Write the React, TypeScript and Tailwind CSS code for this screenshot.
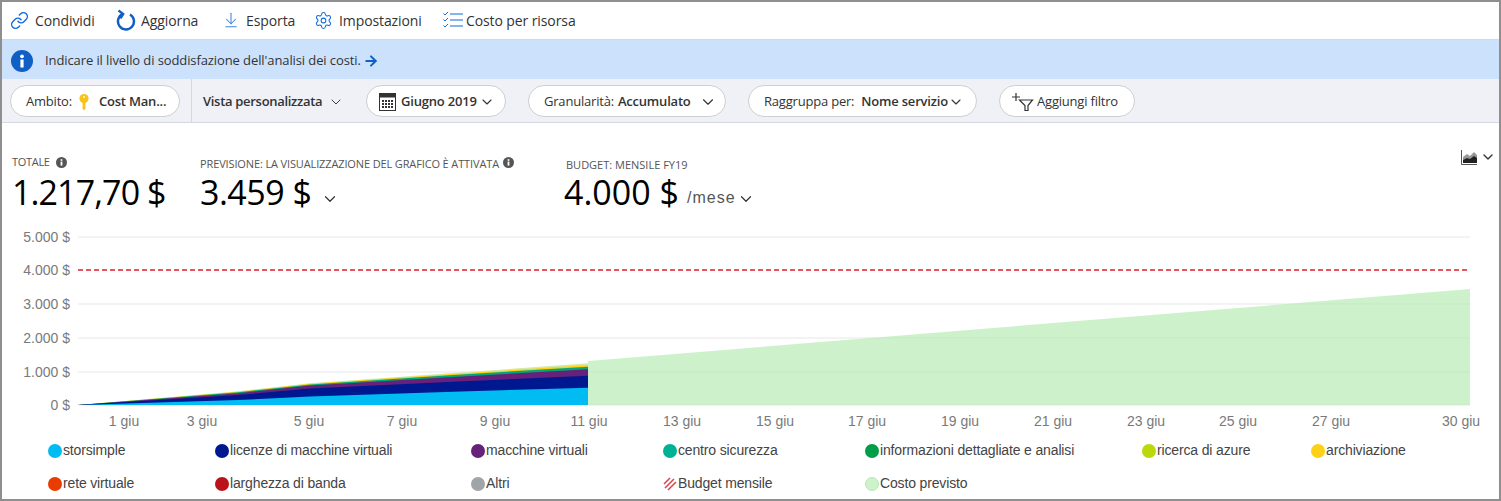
import { ArrowDownToLine, ArrowRight, ChevronDown, Link, Settings } from "lucide-react";

const SEGOE = "font-['Open_Sans',sans-serif]";

const Y_TICKS = [
  { label: "5.000 $", y: 237 },
  { label: "4.000 $", y: 270 },
  { label: "3.000 $", y: 304 },
  { label: "2.000 $", y: 338 },
  { label: "1.000 $", y: 372 },
  { label: "0 $", y: 405 },
];

const X_TICKS = [
  { label: "1 giu", x: 124 },
  { label: "3 giu", x: 202 },
  { label: "5 giu", x: 309 },
  { label: "7 giu", x: 402 },
  { label: "9 giu", x: 495 },
  { label: "11 giu", x: 589 },
  { label: "13 giu", x: 682 },
  { label: "15 giu", x: 775 },
  { label: "17 giu", x: 867 },
  { label: "19 giu", x: 960 },
  { label: "21 giu", x: 1053 },
  { label: "23 giu", x: 1146 },
  { label: "25 giu", x: 1238 },
  { label: "27 giu", x: 1331 },
  { label: "30 giu", x: 1461 },
];

const STACK_X = [78, 238, 310, 453, 588];
const STACK = [
  { color: "#d6e9a8", top: [405, 391.2, 383.2, 373, 363.3] },
  { color: "#fcd116", top: [405, 391.8, 383.8, 374, 365] },
  { color: "#00a878", top: [405, 392.3, 384.5, 375, 366.7] },
  { color: "#68217a", top: [405, 393.3, 385.5, 377, 369.3] },
  { color: "#00188f", top: [405, 395, 388.5, 381.7, 375.7] },
  { color: "#00bcf2", top: [405, 400, 396.5, 391.7, 387.7] },
];

const LEGEND: { label: string; color?: string }[] = [
  { label: "storsimple", color: "bg-[#00bcf2]" },
  { label: "licenze di macchine virtuali", color: "bg-[#00188f]" },
  { label: "macchine virtuali", color: "bg-[#68217a]" },
  { label: "centro sicurezza", color: "bg-[#00b294]" },
  { label: "informazioni dettagliate e analisi", color: "bg-[#009e49]" },
  { label: "ricerca di azure", color: "bg-[#bad80a]" },
  { label: "archiviazione", color: "bg-[#fcd116]" },
  { label: "rete virtuale", color: "bg-[#e83c00]" },
  { label: "larghezza di banda", color: "bg-[#ba141a]" },
  { label: "Altri", color: "bg-[#a0a5a8]" },
  { label: "Budget mensile" },
  { label: "Costo previsto", color: "bg-[#cdf2cc] border border-[#b5e8b4]" },
];

function RefreshIcon() {
  return (
    <svg width="20" height="22" viewBox="0 0 20 22" fill="none" stroke="#0f5fc4" strokeWidth="2.5">
      <path d="M6.5 5.2A8 8 0 1 0 14 5.5" />
      <path d="M2.5 1.5 7.3 5 4.5 9.5" strokeWidth="2.2" />
    </svg>
  );
}

function ChecklistIcon() {
  return (
    <svg width="20" height="18" viewBox="0 0 20 18" fill="none" stroke="#0f6cdb" strokeWidth="1.2">
      <path d="M7 3h13M7 9h13M7 15h13" />
      <path d="M.5 2.5 2 4l3-3M.5 8.5 2 10l3-3M.5 14.5 2 16l3-3" strokeWidth="1" />
    </svg>
  );
}

function InfoDot() {
  return (
    <svg width="11" height="11" viewBox="0 0 11 11">
      <circle cx="5.5" cy="5.5" r="5.5" fill="#555" />
      <rect x="4.6" y="4.6" width="1.8" height="4" fill="#fff" />
      <rect x="4.6" y="2.2" width="1.8" height="1.6" fill="#fff" />
    </svg>
  );
}

function KeyIcon() {
  return (
    <svg width="12" height="17" viewBox="0 0 12 17" fill="#f7c21a">
      <circle cx="6" cy="4.6" r="4.6" />
      <path d="M4.6 8h2.8v6.5L6 16.5l-1.4-2z" />
      <circle cx="6" cy="3" r="1.1" fill="#fff3c0" />
    </svg>
  );
}

function CalendarIcon() {
  return (
    <svg width="17" height="18" viewBox="0 0 17 18">
      <rect x="0.5" y="0.5" width="16" height="17" fill="#fff" stroke="#333" />
      <rect x="0.5" y="0.5" width="16" height="4" fill="#333" />
      {[3, 6, 9, 12].flatMap((x) =>
        [7, 10, 13].map((y) => <rect key={`${x}-${y}`} x={x} y={y} width="2" height="2" fill="#333" />),
      )}
    </svg>
  );
}

function AddFilterIcon() {
  return (
    <svg width="22" height="20" viewBox="0 0 22 20" fill="none" stroke="#333" strokeWidth="1.2">
      <path d="M0 5h8M4 1v8" />
      <path d="M7.5 8h13L16 13.5V18.5h-3V13.5z" />
    </svg>
  );
}

function AreaChartIcon() {
  return (
    <svg width="16" height="15" viewBox="0 0 16 15">
      <path d="M.5 0v14.5H16" fill="none" stroke="#555" />
      <path d="M2 13V7l4-3 3 2 4-4 3 3v8z" fill="#999" />
      <path d="M2 13V10l4-2 3 1 4-3 3 2v5z" fill="#222" />
    </svg>
  );
}

function ToolbarItem({ icon, label, width }: { icon: React.ReactNode; label: string; width: string }) {
  return (
    <div className={`flex items-center ${width}`}>
      <span className="flex w-[25px] shrink-0 items-center">{icon}</span>
      <span className="whitespace-nowrap">{label}</span>
    </div>
  );
}

function Pill({ className, children }: { className: string; children: React.ReactNode }) {
  return (
    <div className={`box-border flex h-[32px] shrink-0 items-center rounded-full border border-[#cfcfcf] bg-white pt-[3px] ${className}`}>
      {children}
    </div>
  );
}

function CostChart() {
  return (
    <svg width="1497" height="208" viewBox="2 225 1497 208" className="block font-['Liberation_Sans',sans-serif]">
      {Y_TICKS.map((t) => (
        <g key={t.label}>
          <text x="70" y={t.y + 5} textAnchor="end" fontSize="14" fill="#7a7a7a">{t.label}</text>
          {t.y !== 270 && <line x1="78" x2="1470" y1={t.y} y2={t.y} stroke="#e8e8e8" strokeWidth="1.2" />}
        </g>
      ))}
      <polygon points="588,405 588,361 1470,289 1470,405" fill="#b5ecb3" fillOpacity="0.68" />
      {STACK.map((layer) => (
        <polygon
          key={layer.color}
          fill={layer.color}
          points={`${STACK_X.map((x, i) => `${x},${layer.top[i]}`).join(" ")} 588,405`}
        />
      ))}
      <line x1="78" x2="1470" y1="270" y2="270" stroke="#d9222a" strokeWidth="1.6" strokeDasharray="5 3" />
      {X_TICKS.map((t) => (
        <text key={t.label} x={t.x} y="426" textAnchor="middle" fontSize="14" fill="#7a7a7a">{t.label}</text>
      ))}
    </svg>
  );
}

export default function App() {
  return (
    <div className={`box-border h-[501px] w-[1501px] overflow-hidden border-2 border-[#8f8f8f] bg-white text-[#333] ${SEGOE}`}>
      {/* toolbar */}
      <div className="box-border flex h-[38px] items-center border-b border-[#d4d8e0] pb-[1px] pl-[8px] text-[14px] tracking-[-0.1px]">
        <ToolbarItem width="w-[106px]" label="Condividi" icon={<Link size={19} color="#0f6cdb" strokeWidth={1.8} />} />
        <ToolbarItem width="w-[105px]" label="Aggiorna" icon={<RefreshIcon />} />
        <ToolbarItem width="w-[93px]" label="Esporta" icon={<ArrowDownToLine size={18} color="#3a86e0" strokeWidth={1.4} className="ml-[1px]" />} />
        <ToolbarItem width="w-[127px]" label="Impostazioni" icon={<Settings size={19} color="#0f6cdb" strokeWidth={1.3} />} />
        <ToolbarItem width="w-[140px]" label="Costo per risorsa" icon={<span className="ml-[2px]"><ChecklistIcon /></span>} />
      </div>

      {/* survey banner */}
      <div className="box-border flex h-[39px] items-center bg-[#cce1fc] pl-[9px] pt-[2px] text-[13px] tracking-[-0.1px]">
        <svg width="22" height="22" viewBox="0 0 22 22" className="mr-[12px]">
          <circle cx="11" cy="11" r="11" fill="#0f5fc4" />
          <rect x="9.4" y="9.5" width="3.2" height="8" fill="#fff" />
          <circle cx="11" cy="6.3" r="1.9" fill="#fff" />
        </svg>
        <span>Indicare il livello di soddisfazione dell'analisi dei costi.</span>
        <ArrowRight size={16} color="#0f5fc4" strokeWidth={3} className="ml-[2px]" />
      </div>

      {/* filters */}
      <div className="box-border flex h-[44px] items-center border-b border-[#d4d8e0] bg-[#eff1f7] pl-[8px] text-[13px] tracking-[-0.2px]">
        <Pill className="w-[170px] pl-[15px]">
          <span>Ambito:</span>
          <span className="ml-[6px] mr-[9px]"><KeyIcon /></span>
          <span className="font-semibold">Cost Man...</span>
        </Pill>
        <div className="ml-[11px] flex h-full w-[175px] shrink-0 items-center border-l border-[#d4d8e0] pl-[11px] pt-[2px] tracking-[-0.3px]">
          <span className="font-semibold">Vista personalizzata</span>
          <ChevronDown size={16} strokeWidth={1.4} className="ml-[6px]" />
        </div>
        <Pill className="w-[140px] pl-[12px]">
          <CalendarIcon />
          <span className="ml-[5px] font-semibold">Giugno 2019</span>
          <ChevronDown size={16} strokeWidth={1.6} className="ml-[2px]" />
        </Pill>
        <Pill className="ml-[22px] w-[198px] pl-[15px]">
          <span>Granularità:</span>
          <span className="ml-[4px] font-semibold">Accumulato</span>
          <ChevronDown size={18} strokeWidth={1.5} className="ml-[8px]" />
        </Pill>
        <Pill className="ml-[22px] w-[229px] pl-[15px]">
          <span>Raggruppa per:</span>
          <span className="ml-[7px] font-semibold">Nome servizio</span>
          <ChevronDown size={16} strokeWidth={1.6} />
        </Pill>
        <Pill className="ml-[22px] w-[136px] pl-[12px]">
          <AddFilterIcon />
          <span className="ml-[3px]">Aggiungi filtro</span>
        </Pill>
      </div>

      {/* totals */}
      <div className="flex h-[102px] pl-[10px] pr-[3px] pt-[31px]">
        <div className="w-[188px] shrink-0">
          <div className="box-border flex h-[18px] items-center gap-[6px] pb-[2px] text-[11px] tracking-[-0.3px] text-[#555]">
            TOTALE <InfoDot />
          </div>
          <div className="text-[34px] leading-[40px] tracking-[-0.9px] text-black">1.217,70 $</div>
        </div>
        <div className="w-[364px] shrink-0">
          <div className="box-border flex h-[18px] items-center gap-[4px] whitespace-nowrap pt-[2px] text-[11px] tracking-[-0.13px] text-[#555]">
            PREVISIONE: LA VISUALIZZAZIONE DEL GRAFICO È ATTIVATA
            <span className="-mt-[3px] flex"><InfoDot /></span>
          </div>
          <div className="flex items-end text-[34px] leading-[40px] tracking-[-0.5px] text-black">
            3.459 $
            <ChevronDown size={18} strokeWidth={1.6} className="mb-[4px] ml-[10px] text-[#333]" />
          </div>
        </div>
        <div className="shrink-0">
          <div className="box-border flex h-[18px] items-center pl-[2px] pt-[4px] text-[11px] tracking-[0px] text-[#555]">BUDGET: MENSILE FY19</div>
          <div className="flex items-end text-[34px] leading-[40px] tracking-[0px] text-black">
            4.000 $
            <span className="mb-[4px] ml-[8px] font-['Liberation_Sans',sans-serif] text-[16px] leading-[20px] tracking-[1px] text-[#555]">/mese</span>
            <ChevronDown size={18} strokeWidth={1.6} className="mb-[4px] ml-[1px] text-[#333]" />
          </div>
        </div>
        <div className="-mt-[5px] ml-auto flex h-[16px] items-center gap-[3px]">
          <AreaChartIcon />
          <ChevronDown size={16} strokeWidth={2} />
        </div>
      </div>

      <CostChart />

      {/* legend */}
      <div className="grid grid-cols-[167px_256px_192px_202px_277px_169px_1fr] pl-[46px] pt-[1px] font-['Liberation_Sans',sans-serif] text-[14px] tracking-[-0.15px] text-[#444]">
        {LEGEND.map((item) => (
          <div key={item.label} className="flex h-[33px] items-center gap-[1px]">
            {item.color ? (
              <span className={`box-border h-[14px] w-[14px] rounded-full ${item.color}`} />
            ) : (
              <svg width="14" height="14" viewBox="0 0 14 14" stroke="#d9424a" strokeWidth="1.5">
                <path d="M1 7 7 1M2 11 11 2M5 13 13 5" />
              </svg>
            )}
            <span>{item.label}</span>
          </div>
        ))}
      </div>
    </div>
  );
}
